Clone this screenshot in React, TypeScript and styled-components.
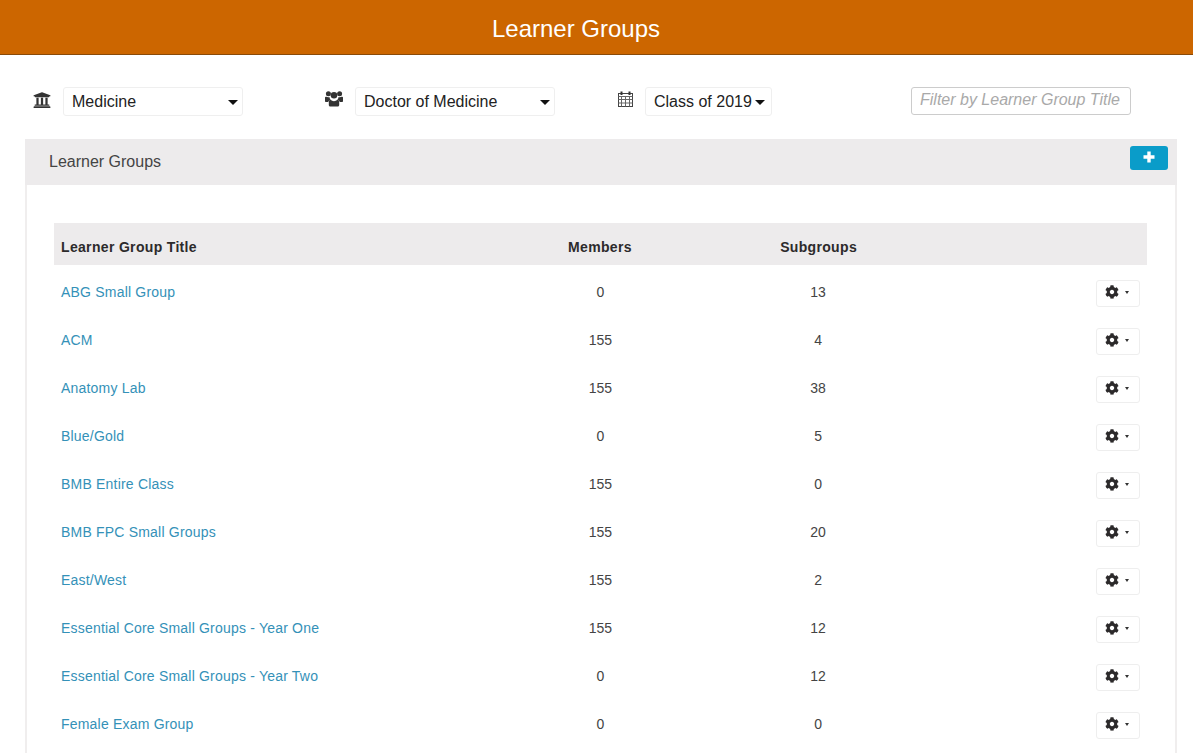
import React from "react";
import styled, { createGlobalStyle } from "styled-components";
import { FaUniversity, FaCog } from "react-icons/fa";

const Global = createGlobalStyle`
  html, body { margin: 0; padding: 0; background: #fff; height: 753px; overflow: hidden; }
  body { font-family: "Liberation Sans", Arial, sans-serif; color: #333; }
`;
const Page = styled.div`width: 1193px; height: 753px; overflow: hidden;`;
const Header = styled.header`
  height: 54px; background: #cc6600; border-bottom: 1px solid #8a4a08;
  color: #fff; font-size: 24px; line-height: 57px; text-align: center; padding-right: 41px;
`;
const Filters = styled.div`
  display: flex; align-items: flex-start; height: 84px; padding: 32px 0 0 33px; box-sizing: border-box;
`;
const FilterGroup = styled.div<{ $w: number }>`
  width: ${p => p.$w}px; display: flex; align-items: flex-start; gap: 12px; color: #333;
  svg { margin-top: 4px; flex: none; }
`;
const Select = styled.div<{ $w: number; $pr?: number }>`
  width: ${p => p.$w}px; height: 29px; box-sizing: border-box; border: 1px solid #efefef; border-radius: 3px;
  padding: 0 ${p => p.$pr ?? 4}px 0 8px; display: flex; align-items: center; justify-content: space-between;
  font-size: 16px; color: #222; background: #fff;
`;
const Caret = styled.span`
  width: 0; height: 0; border-left: 5px solid transparent; border-right: 5px solid transparent;
  border-top: 5px solid #111; margin-top: 1px;
`;
const Filter = styled.input`
  width: 220px; height: 28px; box-sizing: border-box; border: 1px solid #ccc; border-radius: 3px;
  padding: 0 8px 2px; font: italic 16px "Liberation Sans", Arial, sans-serif; margin: 0;
  &::placeholder { color: #a9a9a9; opacity: 1; }
`;
const Panel = styled.section`
  margin-left: 25px; width: 1152px; box-sizing: border-box; border-left: 2px solid #f0eeee; border-right: 2px solid #f0eeee; height: 700px;
`;
const PanelHead = styled.div`
  margin: 0 -2px; height: 46px; background: #edebec; display: flex; justify-content: space-between; align-items: flex-start;
  padding: 0 9px 0 24px; font-size: 16px; color: #444; line-height: 45px;
`;
const AddButton = styled.button`
  width: 38px; height: 24px; margin-top: 7px; padding: 0 0 3px; border: 0; border-radius: 3px; background: #0a9cc9; color: #fff;
  display: flex; align-items: center; justify-content: center;
`;
const Table = styled.table`
  border-collapse: collapse; table-layout: fixed; width: 1093px; margin: 38px 0 0 27px; font-size: 14px;
`;
const Th = styled.th<{ $center?: boolean }>`
  height: 42px; background: #edebec; padding: 6px 7px 0; font-weight: 700; letter-spacing: 0.33px; color: #2c2a2b; box-sizing: border-box;
  text-align: ${p => (p.$center ? "center" : "left")};
  &:nth-child(2), &:nth-child(3) { padding-right: 8px; }
`;
const Td = styled.td<{ $center?: boolean }>`
  height: 48px; padding: 6px 7px 0; box-sizing: border-box; color: #444;
  text-align: ${p => (p.$center ? "center" : "left")};
  &:nth-child(3) { padding-right: 9px; }
`;
const ActionCell = styled.td`height: 48px; padding: 8px 7px 0 0; box-sizing: border-box; text-align: right;`;
const TitleLink = styled.a`color: #3491b8; text-decoration: none; letter-spacing: 0.2px;`;
const GearButton = styled.button`
  width: 44px; height: 27px; padding: 0 0 2px 8px; border: 1px solid #eee; border-radius: 3px; background: #fff; color: #2c2a2b;
  display: inline-flex; align-items: center; justify-content: flex-start; gap: 6px; font-size: 14px; vertical-align: middle;
`;
const SmallCaret = styled.span`
  width: 0; height: 0; border-left: 2.5px solid transparent; border-right: 2.5px solid transparent; border-top: 3px solid #333;
`;

const UsersIcon = () => (
  <svg width="18" height="16" viewBox="0 0 18 16" fill="#333">
    <circle cx="3.4" cy="2.7" r="2.5" />
    <circle cx="14.6" cy="2.7" r="2.5" />
    <circle cx="9" cy="4.2" r="3.3" />
    <path d="M0 6.6C0 5.8.6 5.6 1.4 5.8c1 .5 2 .5 3 .2.1 1 .5 1.9 1.2 2.6C4.3 9 3.6 10 3.3 11H1C.4 11 0 10.6 0 10zM18 6.6c0-.8-.6-1-1.4-.8-1 .5-2 .5-3 .2-.1 1-.5 1.9-1.2 2.6 1.3.4 2 1.4 2.3 2.4H17c.6 0 1-.4 1-1zM5.6 8.8c.9.9 2 1.4 3.4 1.4s2.500-.5 3.400-1.400c1 .2 1.800 1.200 1.800 2.700v2.500c0 .9-.6 1.500-1.500 1.500H5.300c-.9 0-1.500-.6-1.500-1.500v-2.500c0-1.500.8-2.500 1.800-2.700z" />
  </svg>
);
const CalendarIcon = () => (
  <svg width="15" height="16" viewBox="0 0 15 16" fill="none" stroke="#444" strokeWidth="1">
    <rect x="0.5" y="2.500" width="14" height="13" fill="#fff" />
    <path d="M0.500 5.500h14M0.500 8.500h14M0.500 12h14M3.500 5.500v10M7.500 5.500v10M11.500 5.500v10" stroke="#666" />
    <path d="M3.500 0.500v3.500M11.500 0.500v3.500" strokeWidth="2" stroke="#333" />
  </svg>
);
const PlusIcon = () => (
  <svg width="12" height="12" viewBox="0 0 12 12" fill="#fff">
    <path d="M4.300 0.500h3.400v3.800h3.800v3.400H7.700v3.800H4.300V7.700H.5V4.300h3.800z" />
  </svg>
);

const rows: [string, number, number][] = [
  ["ABG Small Group", 0, 13], ["ACM", 155, 4], ["Anatomy Lab", 155, 38], ["Blue/Gold", 0, 5],
  ["BMB Entire Class", 155, 0], ["BMB FPC Small Groups", 155, 20], ["East/West", 155, 2],
  ["Essential Core Small Groups - Year One", 155, 12], ["Essential Core Small Groups - Year Two", 0, 12],
  ["Female Exam Group", 0, 0],
];

export default function App() {
  return (
    <Page>
      <Global />
      <Header>Learner Groups</Header>
      <Filters>
        <FilterGroup $w={292}><FaUniversity size={18} /><Select $w={180}>Medicine<Caret /></Select></FilterGroup>
        <FilterGroup $w={293}><UsersIcon /><Select $w={200}>Doctor of Medicine<Caret /></Select></FilterGroup>
        <FilterGroup $w={293}><CalendarIcon /><Select $w={127} $pr={6}>Class of 2019<Caret /></Select></FilterGroup>
        <Filter placeholder="Filter by Learner Group Title" />
      </Filters>
      <Panel>
        <PanelHead>
          Learner Groups
          <AddButton aria-label="Add"><PlusIcon /></AddButton>
        </PanelHead>
        <Table>
          <colgroup><col width="40%" /><col width="20%" /><col width="20%" /><col width="20%" /></colgroup>
          <thead>
            <tr><Th>Learner Group Title</Th><Th $center>Members</Th><Th $center>Subgroups</Th><Th /></tr>
          </thead>
          <tbody>
            {rows.map(([t, m, s]) => (
              <tr key={t}>
                <Td><TitleLink href="#">{t}</TitleLink></Td>
                <Td $center>{m}</Td>
                <Td $center>{s}</Td>
                <ActionCell><GearButton aria-label="Actions"><FaCog /><SmallCaret /></GearButton></ActionCell>
              </tr>
            ))}
          </tbody>
        </Table>
      </Panel>
    </Page>
  );
}
